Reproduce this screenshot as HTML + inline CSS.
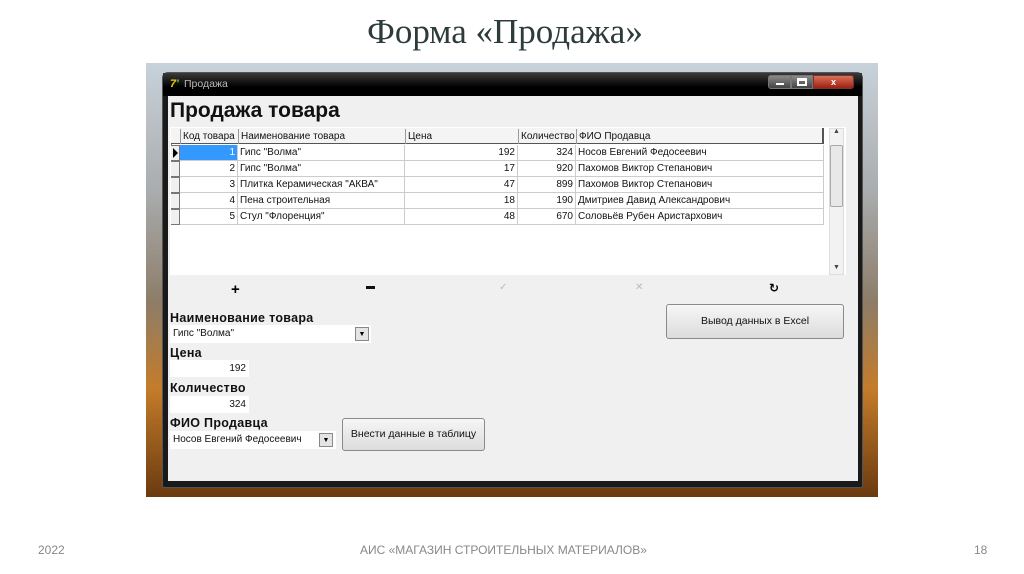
<!DOCTYPE html>
<html><head><meta charset="utf-8"><style>
*{margin:0;padding:0;box-sizing:border-box}
body{width:1024px;height:574px;background:#fff;position:relative;overflow:hidden;font-family:"Liberation Sans","DejaVu Sans",sans-serif}
.abs{position:absolute}
h1{position:absolute;left:0;width:1010px;top:12px;text-align:center;font-family:"Liberation Serif",serif;font-weight:normal;font-size:35px;color:#2e3b3b}
.bg{left:146px;top:63px;width:732px;height:434px;background:linear-gradient(180deg,#c8d2da 0%,#a9abad 30%,#8d7d68 55%,#c47c2a 75%,#6a3a10 100%)}
.win{left:162px;top:72px;width:701px;height:416px;background:#1a1a1a;border:1px solid #555;border-radius:6px 6px 2px 2px}
.tb{left:163px;top:73px;width:699px;height:23px;background:linear-gradient(180deg,#3a3a3a,#000 60%)}
.client{left:168px;top:96px;width:690px;height:385px;background:#f0f0f0}
.cell{position:absolute;font-size:10px;line-height:15px;color:#111;white-space:nowrap;overflow:hidden;padding:0 2px}
.lbl{position:absolute;font-weight:bold;font-size:12.5px;color:#111;letter-spacing:.3px}
.inp{position:absolute;background:#fff;font-size:10px;line-height:18px;color:#111;padding:0 3px}
.btn{position:absolute;border:1px solid #8a8a8a;border-radius:3px;background:linear-gradient(180deg,#f6f6f6,#dcdcdc);font-size:10.5px;color:#111;text-align:center}
.dd{position:absolute;width:14px;height:14px;border:1px solid #888;background:#e4e4e4;font-size:7px;text-align:center;line-height:13px}
.foot{position:absolute;top:543px;font-size:12px;color:#888}
</style></head><body>
<h1>Форма «Продажа»</h1>
<div class="abs bg"></div>
<div class="abs win"></div>
<div class="abs tb"></div>
<div class="abs" style="left:170px;top:78px;font-size:11px;color:#e8d000;font-weight:bold;font-style:italic">7<span style="color:#6c4">'</span></div>
<div class="abs" style="left:184px;top:78px;font-size:10.5px;color:#bbb">Продажа</div>
<div class="abs" style="left:768px;top:75px;width:23px;height:14px;border:1px solid #777;border-radius:3px 0 0 3px;background:linear-gradient(#8a8a8a,#444)"></div>
<div class="abs" style="left:791px;top:75px;width:22px;height:14px;border:1px solid #777;background:linear-gradient(#8a8a8a,#444)"></div>
<div class="abs" style="left:813px;top:75px;width:41px;height:14px;border:1px solid #733;border-radius:0 3px 3px 0;background:linear-gradient(#d8705a,#a02010);color:#fff;font-size:9px;font-weight:bold;text-align:center;line-height:12px">x</div>
<div class="abs" style="left:776px;top:83px;width:8px;height:2px;background:#fff"></div>
<div class="abs" style="left:797px;top:78px;width:10px;height:8px;border:2px solid #fff;border-top-width:3px"></div>
<div class="abs client"></div>
<div class="abs" style="left:170px;top:99px;font-size:21px;font-weight:bold;color:#111">Продажа товара</div>
<div class="abs" style="left:170px;top:127px;width:676px;height:148px;background:#fff"></div>
<div class="abs" style="left:171px;top:128px;width:653px;height:97px;border-left:1px solid #888"></div>
<div class="abs" style="left:171px;top:128px;width:653px;height:16px;background:#f4f4f4;border-bottom:1px solid #555;border-right:2px solid #555"></div>
<div class="abs" style="left:829px;top:128px;width:15px;height:147px;background:#f2f2f2;border:1px solid #ddd"></div>
<div class="abs" style="left:830px;top:145px;width:13px;height:62px;background:#e8e8e8;border:1px solid #aaa;border-radius:2px"></div>
<div class="abs" style="left:833px;top:128px;font-size:7px;color:#444">▲</div>
<div class="abs" style="left:833px;top:264px;font-size:7px;color:#444">▼</div>
<div id="grid"></div>
<div class="abs" style="left:231px;top:281px;font-size:15px;font-weight:bold">+</div>
<div class="abs" style="left:366px;top:286px;width:9px;height:3px;background:#111"></div>
<div class="abs" style="left:499px;top:282px;font-size:10px;color:#bbb">✓</div>
<div class="abs" style="left:635px;top:282px;font-size:10px;color:#bbb">✕</div>
<div class="abs" style="left:769px;top:281px;font-size:12px;font-weight:bold">↻</div>
<div class="lbl" style="left:170px;top:311px">Наименование товара</div>
<div class="inp" style="left:170px;top:325px;width:201px;height:18px">Гипс "Волма"</div>
<div class="dd" style="left:355px;top:327px">▼</div>
<div class="lbl" style="left:170px;top:346px">Цена</div>
<div class="inp" style="left:170px;top:360px;width:79px;height:17px;text-align:right">192</div>
<div class="lbl" style="left:170px;top:381px">Количество</div>
<div class="inp" style="left:170px;top:396px;width:79px;height:17px;text-align:right">324</div>
<div class="lbl" style="left:170px;top:416px">ФИО Продавца</div>
<div class="inp" style="left:170px;top:431px;width:166px;height:18px">Носов Евгений Федосеевич</div>
<div class="dd" style="left:319px;top:433px">▼</div>
<div class="btn" style="left:342px;top:418px;width:143px;height:33px;line-height:31px">Внести данные в таблицу</div>
<div class="btn" style="left:666px;top:304px;width:178px;height:35px;line-height:33px">Вывод данных в Excel</div>
<div class="foot" style="left:38px">2022</div>
<div class="foot" style="left:360px">АИС «МАГАЗИН СТРОИТЕЛЬНЫХ МАТЕРИАЛОВ»</div>
<div class="foot" style="left:974px">18</div>
<script>
var cols=[[180,58,'Код товара','r'],[238,167,'Наименование товара','l'],[405,113,'Цена','r'],[518,58,'Количество','r'],[576,248,'ФИО Продавца','l']];
var rows=[['1','Гипс "Волма"','192','324','Носов Евгений Федосеевич'],['2','Гипс "Волма"','17','920','Пахомов Виктор Степанович'],['3','Плитка Керамическая "АКВА"','47','899','Пахомов Виктор Степанович'],['4','Пена строительная','18','190','Дмитриев Давид Александрович'],['5','Стул "Флоренция"','48','670','Соловьёв Рубен Аристархович']];
var h='';
cols.forEach(function(c){h+='<div class="cell" style="left:'+c[0]+'px;top:129px;width:'+c[1]+'px;border-left:1px solid #999">'+c[2]+'</div>';});
rows.forEach(function(r,i){var y=145+i*16;
h+='<div class="abs" style="left:171px;top:'+y+'px;width:9px;height:16px;background:#f0f0f0;border:1px solid #777;border-left:none"></div>';
cols.forEach(function(c,j){var st='left:'+c[0]+'px;top:'+y+'px;width:'+c[1]+'px;height:16px;border-right:1px solid #ccc;border-bottom:1px solid #ccc;text-align:'+(c[3]=='r'?'right':'left');
if(i==0&&j==0)st+=';background:#3399ff;color:#fff';
h+='<div class="cell" style="'+st+'">'+r[j]+'</div>';});});
h+='<div class="abs" style="left:173px;top:148px;width:0;height:0;border-left:5px solid #000;border-top:5px solid transparent;border-bottom:5px solid transparent"></div>';
document.getElementById('grid').innerHTML=h;
</script>
</body></html>
